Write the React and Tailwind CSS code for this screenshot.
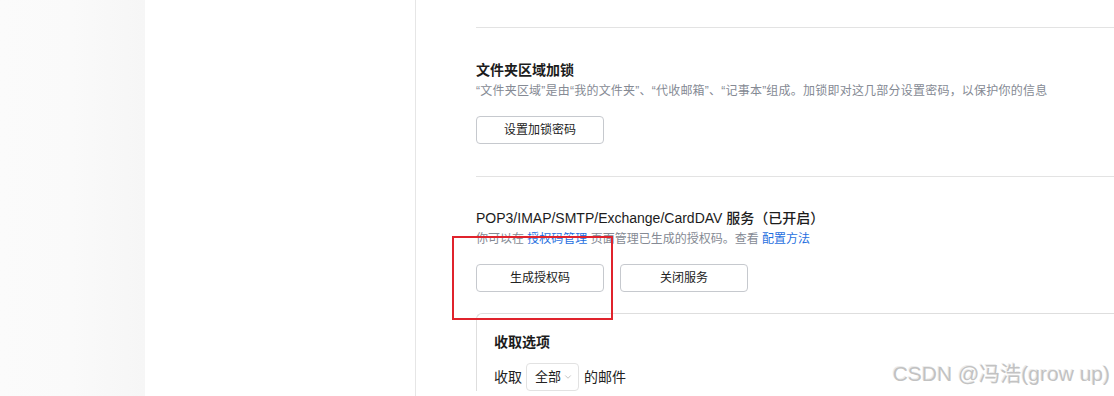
import { ChevronDown } from 'lucide-react'

const cjk = { fontFamily: '"Liberation Sans", "Noto Sans CJK SC", sans-serif' }

function Btn({ children }) {
  return (
    <button className="w-[128px] h-[28px] rounded-[4px] border border-[#c6c9ce] bg-white text-[12px] text-[#222]">
      {children}
    </button>
  )
}

export default function App() {
  return (
    <div className="relative flex h-[396px] w-[1114px] overflow-hidden bg-white" style={cjk}>
      {/* left rail */}
      <div className="w-[145px] shrink-0 bg-gradient-to-r from-[#fbfbfb] via-[#fafafa] to-[#f6f6f6]" />
      {/* middle panel */}
      <div className="w-[271px] shrink-0 border-r border-[#e6e6e6] bg-white" />

      {/* main content */}
      <div className="flex-1 pl-[60px]">
        <div className="mt-[27px] border-t border-[#e3e3e3]" />

        {/* folder lock */}
        <div className="pt-[31px] pb-[32px] border-b border-[#e3e3e3]">
          <h3 className="text-[14px] leading-[22px] font-semibold text-[#1c1c1c]">文件夹区域加锁</h3>
          <p className="text-[12px] leading-[20px] tracking-[0.22px] text-[#858a94]">
            “文件夹区域”是由“我的文件夹”、“代收邮箱”、“记事本”组成。加锁即对这几部分设置密码，以保护你的信息
          </p>
          <div className="mt-[15px]">
            <Btn>设置加锁密码</Btn>
          </div>
        </div>

        {/* pop3 */}
        <div className="pt-[30px]">
          <h3 className="text-[14px] leading-[22px] font-medium text-[#1c1c1c]">
            POP3/IMAP/SMTP/Exchange/CardDAV 服务（已开启）
          </h3>
          <p className="text-[12px] leading-[20px] text-[#858a94]">
            你可以在 <span className="text-[#1f6fe0]">授权码管理</span> 页面管理已生成的授权码。查看{' '}
            <span className="text-[#1f6fe0]">配置方法</span>
          </p>
          <div className="mt-[15px] flex gap-[16px]">
            <Btn>生成授权码</Btn>
            <Btn>关闭服务</Btn>
          </div>

          <div className="mt-[21px] rounded-tl-[6px] border-l border-t border-[#dedede] pl-[17px] pt-[17px]">
            <h4 className="text-[14px] leading-[22px] font-semibold text-[#1c1c1c]">收取选项</h4>
            <div className="mt-[10px] flex items-center text-[14px] text-[#222]">
              <span>收取</span>
              <div className="ml-[4px] flex h-[28px] w-[53px] items-center gap-[2px] rounded-[4px] border border-[#e2e2e2] pl-[8px] text-[13px]">
                全部
                <ChevronDown size={10} strokeWidth={1.5} className="text-[#a0a0a0]" />
              </div>
              <span className="ml-[5px]">的邮件</span>
            </div>
          </div>
        </div>
      </div>

      {/* annotation box */}
      <div className="absolute left-[452px] top-[236px] h-[84px] w-[161px] border-2 border-[#e0232c]" />

      {/* watermark */}
      <div
        className="absolute right-[4px] top-[361px] text-[21px] leading-[26px] text-[#c2c2c2]"
        style={{ textShadow: '1px 1px 0 #ffffff, -1px -1px 0 #ececec' }}
      >
        CSDN @冯浩(grow up)
      </div>
    </div>
  )
}
